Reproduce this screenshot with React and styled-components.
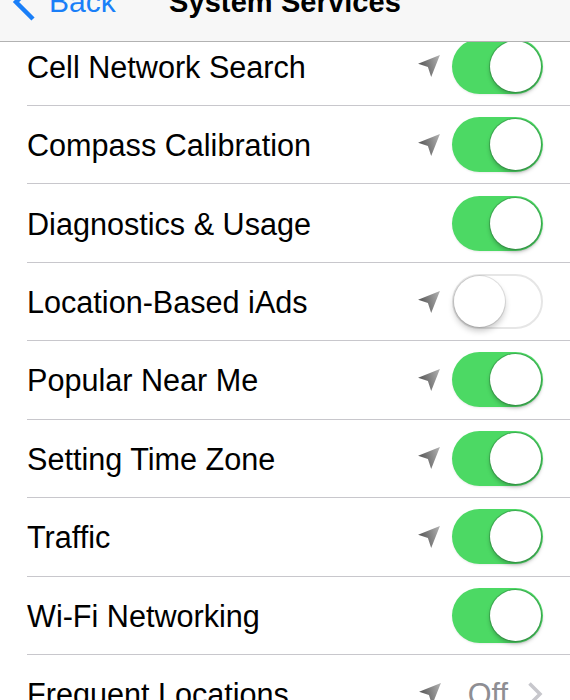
import React from "react";
import styled, { createGlobalStyle } from "styled-components";

const Global = createGlobalStyle`
  html, body { margin: 0; padding: 0; background: #ffffff; }
  body { font-family: "Liberation Sans", Arial, sans-serif; -webkit-font-smoothing: antialiased; }
  #root { width: 570px; }
`;

const Screen = styled.div`
  width: 570px;
  height: 700px;
  overflow: hidden;
  background: #ffffff;
  display: flex;
  flex-direction: column;
`;

const NavBar = styled.header`
  position: relative;
  z-index: 2;
  flex: none;
  height: 79px;
  margin-top: -37px;
  box-sizing: border-box;
  border-bottom: 1px solid #b2b2b2;
  background: #f7f7f7;
  display: grid;
  grid-template-columns: 1fr auto 1fr;
  align-items: center;
`;

const BackButton = styled.div`
  display: flex;
  align-items: center;
  padding-left: 12px;
  color: #1a7ff8;
  font-size: 30px;
  line-height: 1;
`;

const BackLabel = styled.span`
  margin-left: 13px;
`;

const Title = styled.h1`
  margin: 0;
  font-size: 29px;
  font-weight: 700;
  color: #000;
  letter-spacing: 0.1px;
`;

const List = styled.div`
  position: relative;
  z-index: 1;
  margin-top: -14.43px;
  display: flex;
  flex-direction: column;
`;

const Row = styled.div`
  padding-left: 27px;
  flex: none;
`;

const RowInner = styled.div`
  height: 78.43px;
  box-sizing: border-box;
  border-bottom: 1px solid #c8c7cc;
  display: flex;
  align-items: center;
  padding-right: 27px;
`;

const Label = styled.span`
  flex: 1;
  font-size: 30.6px;
  padding-top: 2px;
  color: #000;
  white-space: nowrap;
`;

const Accessories = styled.div`
  display: flex;
  align-items: center;
`;

const Track = styled.div`
  width: 91px;
  height: 55px;
  box-sizing: border-box;
  border-radius: 28px;
  margin-left: ${(p) => (p.$hasArrow ? "11px" : "0")};
  background: ${(p) => (p.$on ? "#4cd964" : "#ffffff")};
  border: ${(p) => (p.$on ? "none" : "2px solid #e6e6e6")};
  box-shadow: ${(p) => (p.$on ? "0 1px 2px rgba(0,0,0,0.08)" : "none")};
  display: flex;
  align-items: center;
  justify-content: ${(p) => (p.$on ? "flex-end" : "flex-start")};
  padding: ${(p) => (p.$on ? "0 2px" : "0")};
`;

const Knob = styled.div`
  width: 51px;
  height: 51px;
  border-radius: 50%;
  background: #ffffff;
  box-shadow: ${(p) =>
    p.$on
      ? "0 0 0 1px rgba(40,110,55,0.4), 0 3px 4px rgba(0,0,0,0.25)"
      : "0 0 0 1px rgba(0,0,0,0.1), 0 4px 6px rgba(0,0,0,0.22)"};
`;

const Value = styled.span`
  font-size: 30.6px;
  padding-top: 2px;
  color: #8e8e93;
  margin-left: 26px;
`;

const Chevron = styled.svg`
  margin-left: 19px;
  flex: none;
`;

const ArrowSvg = styled.svg`
  flex: none;
  display: block;
`;

function LocationArrow() {
  return (
    <ArrowSvg width="24" height="24" viewBox="0 0 22 22">
      <defs>
        <linearGradient id="arrowGrad" x1="0" y1="0.6" x2="1" y2="0.3">
          <stop offset="0" stopColor="#4f4f4f" />
          <stop offset="1" stopColor="#acacac" />
        </linearGradient>
      </defs>
      <path d="M21 1 L1 9 L10 12 L13 21 Z" fill="url(#arrowGrad)" />
    </ArrowSvg>
  );
}

function Toggle({ on, hasArrow }) {
  return (
    <Track $on={on} $hasArrow={hasArrow}>
      <Knob $on={on} />
    </Track>
  );
}

const rows = [
  { label: "Cell Network Search", arrow: true, on: true },
  { label: "Compass Calibration", arrow: true, on: true },
  { label: "Diagnostics & Usage", arrow: false, on: true },
  { label: "Location-Based iAds", arrow: true, on: false },
  { label: "Popular Near Me", arrow: true, on: true },
  { label: "Setting Time Zone", arrow: true, on: true },
  { label: "Traffic", arrow: true, on: true },
  { label: "Wi-Fi Networking", arrow: false, on: true },
];

export default function App() {
  return (
    <>
      <Global />
      <Screen>
        <NavBar>
          <BackButton>
            <svg width="24" height="40" viewBox="0 0 24 40">
              <path
                d="M21 3 L4 20 L21 37"
                fill="none"
                stroke="#1a7ff8"
                strokeWidth="4.5"
                strokeLinejoin="miter"
              />
            </svg>
            <BackLabel>Back</BackLabel>
          </BackButton>
          <Title>System Services</Title>
          <div />
        </NavBar>
        <List>
          {rows.map((r) => (
            <Row key={r.label}>
              <RowInner>
                <Label>{r.label}</Label>
                <Accessories>
                  {r.arrow && <LocationArrow />}
                  <Toggle on={r.on} hasArrow={r.arrow} />
                </Accessories>
              </RowInner>
            </Row>
          ))}
          <Row>
            <RowInner>
              <Label>Frequent Locations</Label>
              <Accessories>
                <LocationArrow />
                <Value>Off</Value>
                <Chevron width="16" height="26" viewBox="0 0 16 26">
                  <path
                    d="M2.5 2.5 L13 13 L2.5 23.5"
                    fill="none"
                    stroke="#c7c7cc"
                    strokeWidth="3.5"
                  />
                </Chevron>
              </Accessories>
            </RowInner>
          </Row>
        </List>
      </Screen>
    </>
  );
}
